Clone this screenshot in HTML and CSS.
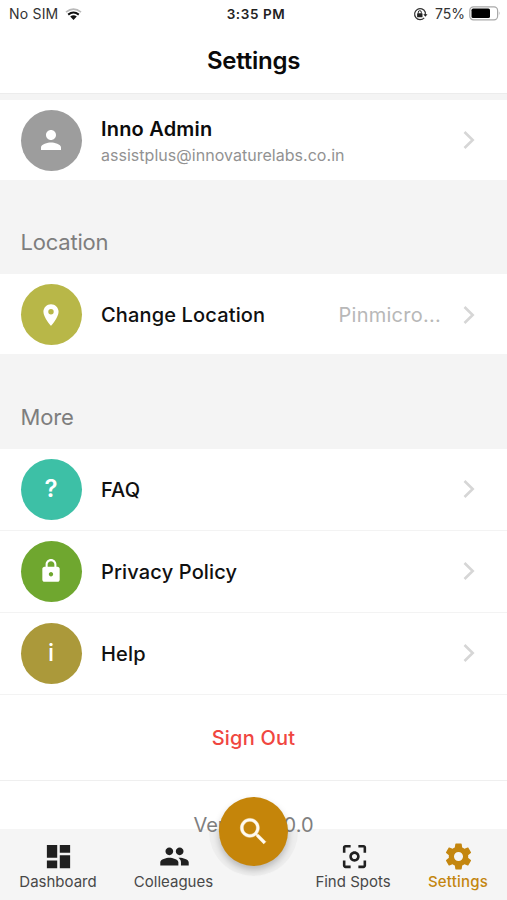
FILE: index.html
```html
<!DOCTYPE html>
<html lang="en">
<head>
<meta charset="utf-8">
<title>Settings</title>
<link rel="stylesheet" href="styles.css">
</head>
<body>
<div class="app">
  <header class="header">
    <div class="status">
      <div class="status-left">
        <span class="carrier">No SIM</span>
        <svg class="wifi" viewBox="0 0 17 12"><path d="M1 4.200Q8.500-2 16 4.200" fill="none" stroke="#b9b9b9" stroke-width="1.700"/><path d="M3.200 6.600Q8.500 2.300 13.800 6.600" fill="none" stroke="#111" stroke-width="2"/><path d="M5.200 8.600Q8.500 6 11.800 8.600L8.500 11.900z" fill="#111"/></svg>
      </div>
      <span class="clock">3:35 PM</span>
      <div class="status-right">
        <svg class="lock-rotation" viewBox="0 0 15 14"><path d="M11.200 10.800A5.500 5.500 0 1 1 12.200 5" fill="none" stroke="#333" stroke-width="1.200"/><path d="M12.300 4.700v3.600" stroke="#333" stroke-width="1.200"/><path d="M10.300 7.200h4.200l-2.100 2.600z" fill="#222"/><rect x="4.100" y="6.300" width="5.400" height="3.900" rx=".5" fill="#222"/><path d="M5.300 6.500V5.200a1.500 1.500 0 0 1 3 0v1.300" fill="none" stroke="#222" stroke-width="1"/></svg>
        <span class="percent">75%</span>
        <svg class="battery" viewBox="0 0 32 15"><rect x=".8" y=".8" width="27.800" height="13" rx="3.600" fill="#fff" stroke="#a9a9a9" stroke-width="1.200"/><rect x="2.500" y="2.600" width="18.500" height="9.400" rx="1.600"/><path d="M29.900 5.200q1.700 2.100 0 4.200z" fill="#a9a9a9"/></svg>
      </div>
    </div>
    <h1 class="title"><span>Settings</span></h1>
  </header>

  <main class="content">
    <section class="group">
      <div class="row">
        <div class="avatar gray"><svg class="i30" viewBox="0 0 24 24"><path d="M12 12c2.210 0 4-1.790 4-4s-1.790-4-4-4-4 1.790-4 4 1.790 4 4 4zm0 2c-2.670 0-8 1.340-8 4v2h16v-2c0-2.660-5.330-4-8-4z"/></svg></div>
        <div class="person"><span class="name">Inno Admin</span><span class="email">assistplus@innovaturelabs.co.in</span></div>
        <svg class="chevron" viewBox="0 0 12 18"><path d="M1.500 1l8.200 8-8.200 8"/></svg>
      </div>
    </section>

    <h2 class="heading">Location</h2>
    <section class="group">
      <div class="row change">
        <div class="avatar lime"><svg class="i25" viewBox="0 0 24 24"><path d="M12 2C8.130 2 5 5.130 5 9c0 5.250 7 13 7 13s7-7.750 7-13c0-3.870-3.130-7-7-7zm0 9.500a2.500 2.500 0 0 1 0-5 2.500 2.500 0 0 1 0 5z"/></svg></div>
        <span class="label">Change Location</span>
        <span class="value">Pinmicro...</span>
        <svg class="chevron" viewBox="0 0 12 18"><path d="M1.500 1l8.200 8-8.200 8"/></svg>
      </div>
    </section>

    <h2 class="heading more">More</h2>
    <section class="group">
      <div class="row lined">
        <div class="avatar teal"><span class="glyph">?</span></div>
        <span class="label">FAQ</span>
        <svg class="chevron" viewBox="0 0 12 18"><path d="M1.500 1l8.200 8-8.200 8"/></svg>
      </div>
      <div class="row lined">
        <div class="avatar green"><svg class="i25" viewBox="0 0 24 24"><path d="M18 8h-1V6c0-2.760-2.240-5-5-5S7 3.240 7 6v2H6c-1.100 0-2 .9-2 2v10c0 1.100.9 2 2 2h12c1.100 0 2-.9 2-2V10c0-1.100-.9-2-2-2zm-6 9c-1.100 0-2-.9-2-2s.9-2 2-2 2 .9 2 2-.9 2-2 2zm3.100-9H8.900V6c0-1.710 1.390-3.100 3.100-3.100 1.710 0 3.100 1.390 3.100 3.100v2z"/></svg></div>
        <span class="label">Privacy Policy</span>
        <svg class="chevron" viewBox="0 0 12 18"><path d="M1.500 1l8.200 8-8.200 8"/></svg>
      </div>
      <div class="row lined">
        <div class="avatar olive"><span class="glyph">i</span></div>
        <span class="label">Help</span>
        <svg class="chevron" viewBox="0 0 12 18"><path d="M1.500 1l8.200 8-8.200 8"/></svg>
      </div>
      <div class="signout"><span>Sign Out</span></div>
      <div class="version"><span>Version 1.0.0</span></div>
    </section>
  </main>

  <nav class="tabs">
    <div class="notch"></div>
    <div class="tab dashboard"><svg viewBox="0 0 24 24"><path d="M3 13h8V3H3v10zm0 8h8v-6H3v6zm10 0h8V11h-8v10zm0-18v6h8V3h-8z"/></svg><span>Dashboard</span></div>
    <div class="tab colleagues"><svg viewBox="0 0 24 24"><path d="M16 11c1.660 0 2.990-1.340 2.990-3S17.660 5 16 5c-1.660 0-3 1.340-3 3s1.340 3 3 3zm-8 0c1.660 0 2.990-1.340 2.990-3S9.660 5 8 5C6.340 5 5 6.340 5 8s1.340 3 3 3zm0 2c-2.330 0-7 1.170-7 3.500V19h14v-2.500c0-2.330-4.670-3.500-7-3.500zm8 0c-.29 0-.62.020-.97.050 1.160.84 1.970 1.970 1.970 3.450V19h6v-2.500c0-2.330-4.670-3.500-7-3.500z"/></svg><span>Colleagues</span></div>
    <div class="tab spots"><svg viewBox="0 0 24 24"><path d="M5 15H3v4c0 1.100.9 2 2 2h4v-2H5v-4zM5 5h4V3H5c-1.100 0-2 .9-2 2v4h2V5zm14-2h-4v2h4v4h2V5c0-1.100-.9-2-2-2zm0 16h-4v2h4c1.100 0 2-.9 2-2v-4h-2v4zM12 8c-2.210 0-4 1.790-4 4s1.790 4 4 4 4-1.790 4-4-1.790-4-4-4zm0 6c-1.100 0-2-.9-2-2s.9-2 2-2 2 .9 2 2-.9 2-2 2z"/></svg><span>Find Spots</span></div>
    <div class="tab settings"><svg viewBox="0 0 24 24"><path d="M19.430 12.980c.040-.32.070-.64.070-.98s-.030-.66-.070-.98l2.110-1.650c.19-.15.24-.42.120-.64l-2-3.460c-.12-.22-.39-.3-.61-.22l-2.490 1c-.52-.4-1.080-.73-1.690-.98l-.38-2.650C14.460 2.180 14.250 2 14 2h-4c-.25 0-.46.18-.49.42l-.38 2.650c-.61.25-1.170.59-1.690.98l-2.490-1c-.23-.09-.49 0-.61.22l-2 3.460c-.13.22-.070.49.12.64l2.110 1.650c-.040.32-.070.65-.070.98s.030.66.070.98l-2.110 1.650c-.19.15-.24.42-.12.64l2 3.460c.12.22.39.3.61.22l2.490-1c.52.4 1.080.73 1.690.98l.38 2.650c.030.24.24.42.49.42h4c.25 0 .46-.18.49-.42l.38-2.650c.61-.25 1.170-.59 1.690-.98l2.490 1c.23.09.49 0 .61-.22l2-3.460c.12-.22.070-.49-.12-.64l-2.110-1.650zM12 15.500c-1.930 0-3.500-1.570-3.500-3.500s1.570-3.500 3.500-3.500 3.500 1.570 3.500 3.500-1.570 3.500-3.500 3.500z"/></svg><span>Settings</span></div>
  </nav>
  <div class="fab"><svg viewBox="0 0 24 24"><path d="M15.500 14h-.79l-.28-.27C15.410 12.590 16 11.110 16 9.500 16 5.910 13.090 3 9.500 3S3 5.910 3 9.500 5.910 16 9.500 16c1.610 0 3.090-.59 4.230-1.570l.27.28v.79l5 4.990L20.490 19l-4.990-5zm-6 0C7.010 14 5 11.990 5 9.500S7.010 5 9.500 5 14 7.010 14 9.500 11.990 14 9.500 14z"/></svg></div>
</div>
</body>
</html>
```
FILE: styles.css
```css
* { box-sizing: border-box; }
body {
  margin: 0;
  font-family: Inter, "Liberation Sans", sans-serif;
  color: #101010;
  background: #fff;
}
svg { display: block; flex: none; }
.app { position: relative; height: 900px; overflow: hidden; background: #f4f4f4; }

.header { height: 94px; background: #fff; border-bottom: 1px solid #ececec; }
.status {
  display: grid;
  grid-template-columns: 1fr auto 1fr;
  align-items: center;
  height: 27px;
  padding: 0 6px 0 9px;
  font-size: 14px;
  white-space: nowrap;
}
.status-left, .status-right { display: flex; align-items: center; }
.status-right { justify-content: flex-end; }
.carrier { color: #333; letter-spacing: .2px; }
.wifi { width: 17px; height: 12px; margin-left: 7px; }
.clock { font-weight: 600; font-size: 13.5px; letter-spacing: .6px; margin-left: 2px; color: #222; }
.lock-rotation { width: 15px; height: 14px; margin-right: 7px; }
.percent { color: #333; }
.battery { width: 32px; height: 15px; margin-left: 4px; }
.title {
  margin: 0;
  height: 66px;
  display: flex;
  align-items: center;
  justify-content: center;
  font-size: 24px;
  font-weight: 600;
  letter-spacing: -.25px;
  color: #0a0a0a;
}

.content { padding-top: 6px; }
.group { background: #fff; }
.row { display: flex; align-items: center; height: 80px; padding: 0 32px 0 20.5px; }
.row.lined { height: 82px; padding-bottom: 1px; border-bottom: 1px solid #f3f3f3; }
.row.change { padding-top: 1px; }
.avatar {
  width: 61px;
  height: 61px;
  border-radius: 50%;
  flex: none;
  display: flex;
  align-items: center;
  justify-content: center;
  color: #fff;
}
.avatar svg { fill: #fff; }
.i30 { width: 30px; height: 30px; }
.i25 { width: 26px; height: 26px; }
.gray { background: #9d9d9d; }
.lime { background: #b8b748; }
.teal { background: #3dc0a6; }
.green { background: #6fa72f; }
.olive { background: #ab993a; }
.glyph { font-size: 24px; font-weight: 600; line-height: 30px; }
.olive .glyph { font-weight: 500; }
.person { display: flex; flex-direction: column; flex: 1; margin-left: 19.5px; padding-top: 4px; white-space: nowrap; }
.person span { align-self: flex-start; }
.name { font-size: 20px; line-height: 26px; font-weight: 600; letter-spacing: .2px; color: #0c0c0c; }
.email { font-size: 16px; line-height: 26px; letter-spacing: .03px; color: #929292; }
.label { flex: 1; margin-left: 19.5px; padding-top: 1px; font-size: 20px; font-weight: 500; letter-spacing: .15px; white-space: nowrap; }
.value { margin-right: 22px; padding-top: 1px; font-size: 20px; color: #b8b8b8; letter-spacing: .25px; }
.chevron { width: 12px; height: 18px; fill: none; stroke: #d6d6d6; stroke-width: 2.6; }
.heading {
  margin: 0;
  height: 94px;
  padding: 48px 21px 0 20.5px;
  font-size: 22px;
  line-height: 28px;
  font-weight: 400;
  letter-spacing: -.2px;
  color: #7e7e7e;
}
.heading.more { height: 95px; padding-top: 49px; }
.signout {
  height: 86px;
  border-bottom: 1px solid #efefef;
  display: flex;
  align-items: center;
  justify-content: center;
  font-size: 20px;
  font-weight: 500;
  letter-spacing: .2px;
  color: #f0463f;
}
.version {
  height: 119px;
  padding-top: 31px;
  text-align: center;
  font-size: 20px;
  line-height: 26px;
  color: #7f7f7f;
}
.version span { position: relative; z-index: 2; }

.tabs {
  position: absolute;
  left: 0;
  right: 0;
  bottom: 0;
  height: 71px;
  background: #f5f5f5;
  z-index: 1;
  display: grid;
  grid-template-columns: 116px 115px 167px 1fr;
}
.notch {
  position: absolute;
  left: 209px;
  top: -42px;
  width: 89px;
  height: 89px;
  border-radius: 50%;
  clip-path: inset(42px 0 0 0);
  background: #eee;
}
.tab { display: flex; flex-direction: column; align-items: center; padding-top: 12px; white-space: nowrap; }
.tab svg { width: 31px; height: 31px; fill: #202020; }
.tab span { margin-top: 1px; font-size: 15px; line-height: 18px; color: #484848; }
.spots { padding-left: 77px; }
.spots svg { margin-left: 2px; }
.settings { padding-left: 11px; }
.colleagues svg, .settings svg { margin-left: 1px; }
.tab.settings svg { fill: #c4860f; }
.tab.settings span { color: #c4860f; font-weight: 500; letter-spacing: .2px; }
.fab {
  position: absolute;
  left: 219px;
  top: 797px;
  width: 69px;
  height: 69px;
  border-radius: 50%;
  z-index: 3;
  background: #c5850a;
  box-shadow: 0 4px 7px rgba(0, 0, 0, .23);
  display: flex;
  align-items: center;
  justify-content: center;
}
.fab svg { width: 35px; height: 35px; fill: #fffaf0; stroke: #fffaf0; stroke-width: .3; }
```
